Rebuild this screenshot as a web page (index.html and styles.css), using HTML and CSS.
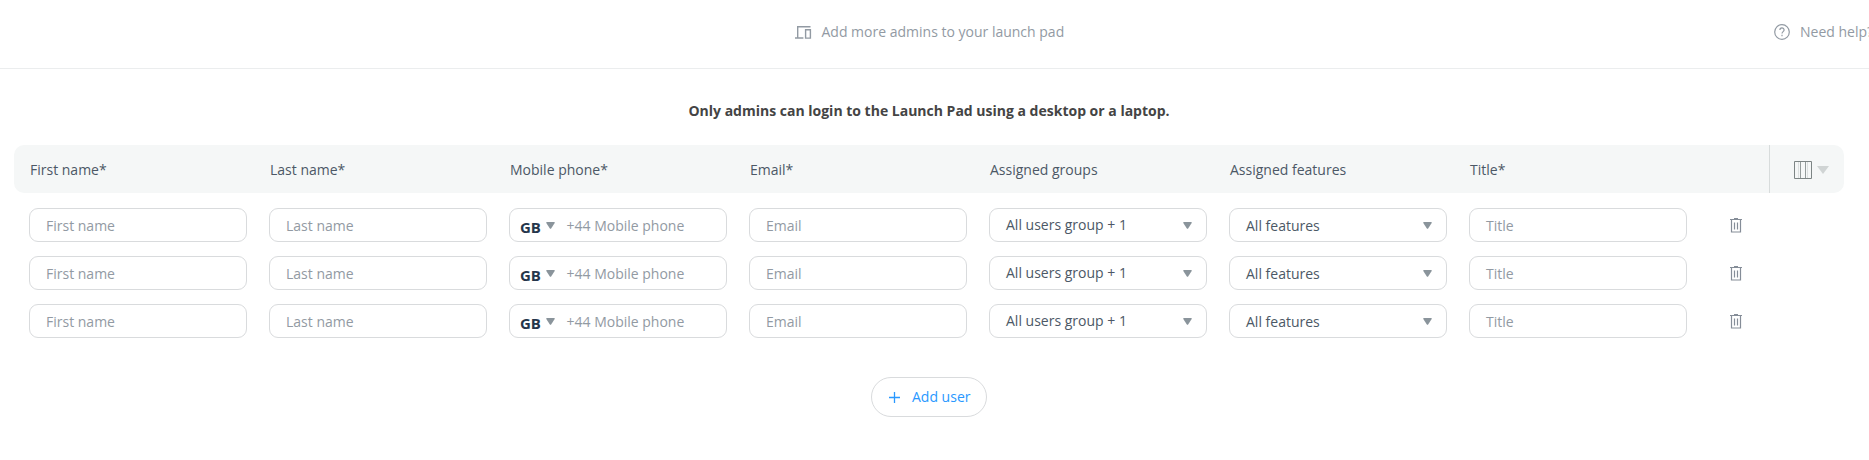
FILE: index.html
```
<!DOCTYPE html>
<html lang="en">
<head>
<meta charset="utf-8">
<title>Add admins</title>
<link rel="stylesheet" href="styles.css">
</head>
<body>
<svg class="defs" width="0" height="0">
  <symbol id="caret" viewBox="0 0 9 7"><path d="M0.8 0h7.4q.9 0 .5 1L5.3 6.3q-.8 1-1.6 0L.3 1Q-.1 0 .8 0z" fill="currentColor"/></symbol>
  <symbol id="trash" viewBox="0 0 12 15"><path d="M0 1.5h12M4 .6h4M1.5 2v12h9V2M4.5 4.5v7M7.5 4.5v7" fill="none" stroke="currentColor" stroke-width="1.2"/></symbol>
</svg>
<header class="topbar">
  <div class="topbar-title">
    <svg width="17" height="13" viewBox="0 0 17 13" fill="none" stroke="currentColor" stroke-width="1.4"><path d="M15.5 .7H2.7v11M0 12h8.4M10.6 3.7h4.8v8.4h-4.8z"/></svg>
    <span>Add more admins to your launch pad</span>
  </div>
  <div class="help">
    <svg width="16" height="16" viewBox="0 0 16 16" fill="none" stroke="currentColor" stroke-width="1.2"><circle cx="8" cy="8" r="7.3"/><path d="M5.9 6.1C5.9 3.2 10.1 3.2 10.1 6c0 1.6-2.1 1.7-2.1 3.5M8 10.8v1.4"/></svg>
    <span>Need help?</span>
  </div>
</header>
<main class="content">
  <p class="notice">Only admins can login to the Launch Pad using a desktop or a laptop.</p>
  <div class="table-head">
    <span>First name*</span><span>Last name*</span><span>Mobile phone*</span><span>Email*</span><span>Assigned groups</span><span>Assigned features</span><span>Title*</span>
    <div class="columns-menu">
      <svg width="18" height="18" viewBox="0 0 18 18" fill="none"><path d="M4.5 1v16M13.5 1v16" stroke="#dce0e0"/><path d="M6.5 1v16M11.5 1v16" stroke="#949b9b"/><path d="M.5 .5h17v17H.5z" stroke="#7d8585"/></svg>
      <svg width="12" height="8" viewBox="0 0 12 8"><path d="M0 0h12L6 8z" fill="#d0d4d4"/></svg>
    </div>
  </div>
  <div class="rows">
    <div class="row">
      <div class="field">First name</div><div class="field">Last name</div>
      <div class="field phone"><b>GB</b><svg class="caret"><use href="#caret"/></svg><span>+44 Mobile phone</span></div>
      <div class="field">Email</div>
      <div class="field select groups"><span>All users group + 1</span><svg class="caret"><use href="#caret"/></svg></div>
      <div class="field select"><span>All features</span><svg class="caret"><use href="#caret"/></svg></div>
      <div class="field">Title</div>
      <svg class="trash"><use href="#trash"/></svg>
    </div>
    <div class="row">
      <div class="field">First name</div><div class="field">Last name</div>
      <div class="field phone"><b>GB</b><svg class="caret"><use href="#caret"/></svg><span>+44 Mobile phone</span></div>
      <div class="field">Email</div>
      <div class="field select groups"><span>All users group + 1</span><svg class="caret"><use href="#caret"/></svg></div>
      <div class="field select"><span>All features</span><svg class="caret"><use href="#caret"/></svg></div>
      <div class="field">Title</div>
      <svg class="trash"><use href="#trash"/></svg>
    </div>
    <div class="row">
      <div class="field">First name</div><div class="field">Last name</div>
      <div class="field phone"><b>GB</b><svg class="caret"><use href="#caret"/></svg><span>+44 Mobile phone</span></div>
      <div class="field">Email</div>
      <div class="field select groups"><span>All users group + 1</span><svg class="caret"><use href="#caret"/></svg></div>
      <div class="field select"><span>All features</span><svg class="caret"><use href="#caret"/></svg></div>
      <div class="field">Title</div>
      <svg class="trash"><use href="#trash"/></svg>
    </div>
  </div>
  <div class="add-user">
    <svg width="11" height="11" viewBox="0 0 11 11"><path d="M5.5 0v11M0 5.5h11" stroke="currentColor" stroke-width="1.3"/></svg>
    <span>Add user</span>
  </div>
</main>
</body>
</html>
```
FILE: styles.css
```
* { box-sizing: border-box; }
body {
  margin: 0;
  height: 460px;
  overflow: hidden;
  background: #fff;
  color: #4c5866;
  font: 14px/20px "Open Sans", sans-serif;
}
.defs { display: block; height: 0; }
svg { flex: none; }
.topbar {
  display: grid;
  grid-template-columns: 795px 979px 1fr;
  align-items: center;
  height: 69px;
  padding-bottom: 4px;
  border-bottom: 1px solid #ebedee;
  color: #929aa3;
  white-space: nowrap;
}
.topbar-title { grid-column: 2; display: flex; align-items: center; gap: 9.5px; }
.help { display: flex; align-items: center; gap: 10px; }
.content { display: flex; flex-direction: column; padding-left: 14px; }
.notice {
  width: 1830px;
  margin: 32px 0 24px;
  text-align: center;
  font-weight: 700;
  color: #444;
}
.table-head {
  display: grid;
  grid-template-columns: repeat(7, 240px) 1fr;
  align-items: center;
  width: 1830px;
  height: 48px;
  padding-left: 16px;
  border-radius: 10px;
  background: #f5f7f7;
}
.table-head > span { padding-top: 2px; }
.columns-menu {
  display: flex;
  align-items: center;
  gap: 5px;
  justify-self: end;
  width: 75px;
  height: 48px;
  padding: 2px 0 0 24px;
  border-left: 1px solid #d8dcdc;
}
.rows { display: flex; flex-direction: column; gap: 14px; padding: 15px 0 0 15px; }
.row {
  display: grid;
  grid-template-columns: repeat(7, 218px) 13px;
  column-gap: 22px;
  align-items: center;
}
.field {
  display: flex;
  align-items: center;
  height: 34px;
  padding: 2px 16px 0;
  border: 1px solid #d9dbdd;
  border-radius: 9px;
  color: #929aa3;
}
.select { justify-content: space-between; padding-right: 14px; color: #4c5866; }
.groups { padding-top: 0; }
.caret { width: 9px; height: 7px; color: #8a949b; }
.select .caret { margin-top: -2px; }
.groups .caret { margin-top: 0; }
.phone { padding-left: 10px; }
.phone b { width: 20px; margin-top: 2px; font-size: 15px; color: #25364b; }
.phone .caret { margin: -2px 12px 0 5.5px; }
.trash { width: 12px; height: 15px; margin-left: 21px; color: #858d98; }
.add-user {
  display: flex;
  align-items: center;
  gap: 12px;
  width: 116px;
  height: 40px;
  margin: 39px 0 0 857px;
  padding-left: 17px;
  border: 1px solid #d9dbdd;
  border-radius: 20px;
  color: #2998ff;
}
```
